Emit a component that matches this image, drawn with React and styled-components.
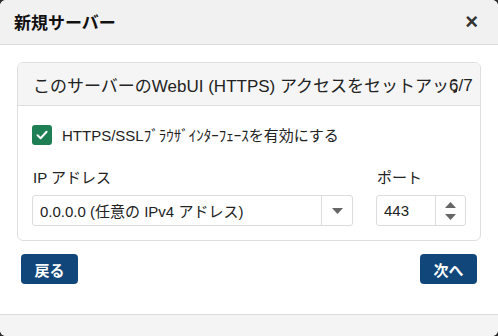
import React from 'react';
import styled, { createGlobalStyle } from 'styled-components';

const Global = createGlobalStyle`
    html, body {
        margin: 0;
        padding: 0;
        background: #2b2b2b;
    }
    * { box-sizing: border-box; }
`;

const Dialog = styled.div`
    width: 498px;
    height: 336px;
    background: #fff;
    border-radius: 6px;
    overflow: hidden;
    display: flex;
    flex-direction: column;
    font-family: "Liberation Sans", Arial, "Noto Sans CJK JP", sans-serif;
    color: #212529;
`;

const Header = styled.div`
    height: 45px;
    flex: none;
    background: #f1f1f1;
    border-bottom: 1px solid #dcdcdc;
    display: flex;
    align-items: center;
    justify-content: space-between;
    padding: 0 20px 1px 14px;
    h1 {
        margin: 0;
        font-size: 17px;
        font-weight: bold;
        color: #111;
    }
`;

const Close = styled.span`
    font-size: 22px;
    font-weight: bold;
    color: #333;
    line-height: 1;
`;

const Body = styled.div`
    flex: none;
    padding: 17px 17px 0 17px;
`;

const Card = styled.div`
    border: 1px solid #dedede;
    border-radius: 6px;
    height: 179px;
    overflow: hidden;
`;

const CardHead = styled.div`
    position: relative;
    height: 43px;
    background: #f5f5f5;
    border-bottom: 1px solid #dedede;
    display: flex;
    align-items: center;
    padding-left: 15px;
`;

const CardTitle = styled.div`
    font-size: 17px;
    white-space: nowrap;
    overflow: hidden;
    width: 424px;
    color: #222;
`;

/* step counter sits over the clipped end of the title, as in the app */
const Step = styled.span`
    position: absolute;
    left: 431px;
    top: 0;
    bottom: 0;
    display: flex;
    align-items: center;
    padding-top: 4px;
    font-size: 17px;
    color: #222;
`;

const CardBody = styled.div`
    padding: 18px 14px 0 14px;
`;

const CheckRow = styled.label`
    display: flex;
    align-items: center;
    gap: 10px;
    font-size: 15px;
    color: #222;
`;

const Box = styled.span`
    width: 20px;
    height: 20px;
    border-radius: 3px;
    background: #1f7f54;
    display: flex;
    align-items: center;
    justify-content: center;
`;

const Fields = styled.div`
    display: flex;
    justify-content: space-between;
    margin-top: 21px;
`;

const Field = styled.div`
    display: flex;
    flex-direction: column;
    width: ${p => p.$w}px;
`;

const Label = styled.div`
    font-size: 15px;
    color: #222;
    height: 24px;
    margin-bottom: 5px;
    padding-left: 1px;
`;

const Control = styled.div`
    height: 31px;
    border: 1px solid #dcdcdc;
    border-radius: 3px;
    display: flex;
    align-items: stretch;
    background: #fff;
`;

const Value = styled.div`
    flex: 1;
    display: flex;
    align-items: center;
    padding-left: 7px;
    font-size: 15px;
    color: #222;
`;

const Side = styled.div`
    width: ${p => p.$w}px;
    border-left: 1px solid #dcdcdc;
    display: flex;
    flex-direction: column;
    align-items: center;
    justify-content: center;
    gap: ${p => p.$gap || 0}px;
`;

const Footer = styled.div`
    flex: none;
    display: flex;
    justify-content: space-between;
    padding: 13px 21px 0 21px;
    height: 73px;
`;

const Button = styled.button`
    height: 30px;
    width: 57px;
    border: none;
    border-radius: 4px;
    background: #11467a;
    color: #fff;
    font-family: "Noto Sans CJK JP", sans-serif;
    font-size: 15px;
    font-weight: bold;
    padding: 0;
`;

const Bottom = styled.div`
    flex: 1;
    background: #f4f4f4;
    border-top: 1px solid #dcdcdc;
`;

const Tri = ({ up }) => (
    <svg width="11" height="6" viewBox="0 0 11 6">
        <path d={up ? 'M0 6 L5.5 0 L11 6 Z' : 'M0 0 L5.5 6 L11 0 Z'} fill="#666" />
    </svg>
);

const App = () => {
    return (
        <>
            <Global />
            <Dialog>
                <Header>
                    <h1>新規サーバー</h1>
                    <Close>×</Close>
                </Header>
                <Body>
                    <Card>
                        <CardHead>
                            <CardTitle>このサーバーのWebUI (HTTPS) アクセスをセットアップ</CardTitle>
                            <Step>6/7</Step>
                        </CardHead>
                        <CardBody>
                            <CheckRow>
                                <Box>
                                    <svg width="14" height="14" viewBox="0 0 14 14">
                                        <path d="M2.5 7.2 L5.6 10.2 L11.6 3.8" stroke="#fff" strokeWidth="2" fill="none" strokeLinecap="round" strokeLinejoin="round" />
                                    </svg>
                                </Box>
                                HTTPS/SSLﾌﾞﾗｳｻﾞｲﾝﾀｰﾌｪｰｽを有効にする
                            </CheckRow>
                            <Fields>
                                <Field $w={321}>
                                    <Label>IP アドレス</Label>
                                    <Control>
                                        <Value>0.0.0.0 (任意の IPv4 アドレス)</Value>
                                        <Side $w={31}><Tri /></Side>
                                    </Control>
                                </Field>
                                <Field $w={90}>
                                    <Label>ポート</Label>
                                    <Control>
                                        <Value>443</Value>
                                        <Side $w={30} $gap={6}><Tri up /><Tri /></Side>
                                    </Control>
                                </Field>
                            </Fields>
                        </CardBody>
                    </Card>
                </Body>
                <Footer>
                    <Button>戻る</Button>
                    <Button>次へ</Button>
                </Footer>
                <Bottom />
            </Dialog>
        </>
    );
};

export default App;
